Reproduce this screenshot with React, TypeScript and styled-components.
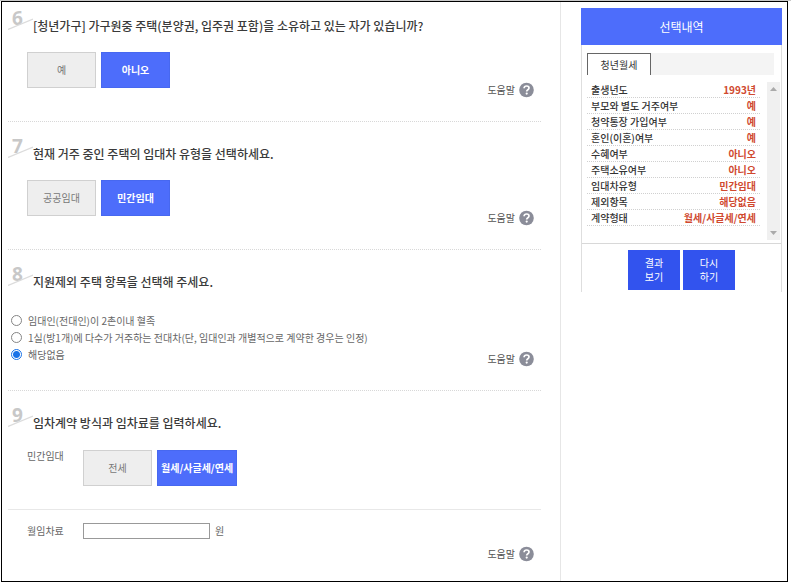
import React, { useState } from "react";
import styled, { createGlobalStyle } from "styled-components";

const GlobalStyle = createGlobalStyle`
  * { box-sizing: border-box; }
  body {
    margin: 0;
    background: #fff;
    color: #333;
    font-family: "Noto Sans CJK KR", "Noto Sans", sans-serif;
    font-size: 10px;
    line-height: 16px;
  }
  button, input { font: inherit; }
  h1, h2, dl, dd, dt, fieldset { margin: 0; padding: 0; border: 0; }
`;

const Page = styled.div`
  min-height: 100vh;
  display: flex;
  padding: 0 3px 2px 1px;
  border-top: 1px solid #c8c8c8;
`;

const Frame = styled.div`
  flex: 1;
  display: flex;
  border: 1px solid #000;
`;

const Questions = styled.main`
  flex: 1;
  min-width: 0;
  padding: 0 19px 0 6px;
  border-right: 1px solid #e6e6e6;
`;

const Section = styled.section`
  padding: 16px 0 23px;
  border-bottom: 1px dotted #d8d8d8;

  &:first-child { padding-top: 8px; }
  &:last-child { border-bottom: 0; padding-bottom: 16px; }
`;

const Head = styled.header`
  display: flex;
  height: 26px;
`;

const Numeral = styled.span`
  position: relative;
  width: 25px;
  padding-left: 4px;
  color: #c8c8c8;
  font-family: "Open Sans", "Noto Sans", sans-serif;
  font-size: 19px;
  font-weight: 700;
  line-height: 16px;
`;

const Slash = styled.svg`
  position: absolute;
  left: 0;
  top: 8px;
`;

const Title = styled.h2`
  padding-top: 7px;
  color: #3a3a3a;
  font-size: 12px;
  font-weight: 500;
  line-height: 18px;
`;

const Body = styled.div<{ $gap?: number; $height?: number }>`
  display: flex;
  align-items: flex-end;
  justify-content: space-between;
  min-height: ${(p) => p.$height ?? 46}px;
  margin-top: ${(p) => p.$gap ?? 16}px;
  padding-right: 7px;
`;

const Choices = styled.div<{ $indent?: boolean }>`
  display: flex;
  align-self: flex-start;
  gap: 5px;
  padding-left: ${(p) => (p.$indent ? 19 : 0)}px;
`;

const Choice = styled.button<{ $on: boolean }>`
  min-width: 69px;
  height: 36px;
  padding: 0 3px;
  border: 1px solid ${(p) => (p.$on ? "#4768f0" : "#d0d0d0")};
  background: ${(p) => (p.$on ? "#4d6dfb" : "#eee")};
  color: ${(p) => (p.$on ? "#fff" : "#777")};
  font-weight: ${(p) => (p.$on ? 700 : 400)};
  white-space: nowrap;
`;

const HelpButton = styled.button`
  display: flex;
  align-items: center;
  gap: 4px;
  flex-shrink: 0;
  margin-left: auto;
  padding: 0;
  border: 0;
  background: none;
  color: #555;
`;

const RadioList = styled.fieldset`
  align-self: flex-start;
  min-width: 0;
  padding-left: 3px;
`;

const RadioRow = styled.label`
  display: flex;
  align-items: center;
  gap: 6px;
  height: 17px;
  color: #666;
`;

const Radio = styled.input`
  appearance: none;
  flex-shrink: 0;
  width: 11px;
  height: 11px;
  margin: 0;
  border: 1px solid #858585;
  border-radius: 50%;
  background: #fff;

  &:checked {
    border-color: #1a73e8;
    background: radial-gradient(circle, #1a73e8 3px, #fff 4px);
  }
`;

const FieldRow = styled.div`
  display: flex;
  padding-left: 19px;
  color: #666;
`;

const FieldLabel = styled.label`
  width: 56px;
  line-height: 12px;
`;

const FieldTitle = styled(FieldLabel).attrs({ as: "span" })``;

const Rule = styled.hr`
  margin: 23px 0 13px;
  border: 0;
  border-top: 1px solid #e8e8e8;
`;

const RentRow = styled(FieldRow)`
  align-items: center;
`;

const RentInput = styled.input`
  width: 127px;
  height: 16px;
  margin-right: 5px;
  padding: 0 4px;
  border: 1px solid #999;
  background: #fff;
`;

const HelpLine = styled.div`
  display: flex;
  margin-top: 7px;
  padding-right: 7px;
`;

const Side = styled.aside`
  width: 226px;
  flex-shrink: 0;
  padding: 6px 5px 0 20px;
`;

const Card = styled.div`
  border: 1px solid #dedede;
  border-top: 0;
  border-bottom: 0;
`;

const SideTitle = styled.h1`
  margin: 0 -1px;
  background: #4d6dfb;
  color: #fff;
  font-size: 12px;
  font-weight: 400;
  line-height: 37px;
  text-align: center;
`;

const Tabs = styled.div`
  margin: 8px 7px 7px 5px;
  background: #f4f4f4;
`;

const Tab = styled.button`
  display: block;
  width: 64px;
  height: 22px;
  padding: 0;
  border: 1px solid #666;
  border-bottom: 0;
  background: #fff;
  color: #333;
`;

const ListArea = styled.div`
  display: flex;
  justify-content: space-between;
  padding: 0 1px 3px 5px;
  border-bottom: 1px solid #d8d8d8;
`;

const Summary = styled.dl`
  flex: 1;
  margin-right: 7px;
`;

const SummaryRow = styled.div`
  display: flex;
  justify-content: space-between;
  height: 16px;
  padding: 0 4px;
  border-bottom: 1px dotted #d0d0d0;
  line-height: 15px;
  font-weight: 500;

  dt { color: #333; }
  dd { color: #d0492f; font-weight: 700; }
`;

const ScrollTrack = styled.div`
  display: flex;
  flex-direction: column;
  align-items: center;
  justify-content: space-between;
  width: 13px;
  height: 158px;
  padding: 5px 0;
  background: #f0f0f0;
`;

const Actions = styled.div`
  display: flex;
  justify-content: center;
  gap: 3px;
  padding: 6px 0 2px;
`;

const Action = styled.button`
  width: 52px;
  height: 40px;
  padding: 0;
  border: 0;
  background: #3253ee;
  color: #fff;
  line-height: 14px;
`;

function QuestionHead({ number, title }: { number: number; title: string }) {
  return (
    <Head>
      <Numeral>
        {number}
        <Slash width="25" height="12" viewBox="0 0 25 12" aria-hidden="true">
          <path d="M0 11.5 25 1" stroke="#dcdcdc" strokeWidth="1.2" />
        </Slash>
      </Numeral>
      <Title>{title}</Title>
    </Head>
  );
}

function Help() {
  return (
    <HelpButton type="button">
      도움말
      <svg width="15" height="16" viewBox="0 0 15 16" aria-hidden="true">
        <circle cx="7.5" cy="8" r="7.3" fill="#8b8d99" />
        <path
          d="M5.1 6.3c0-1.4 1-2.3 2.5-2.3S10 4.8 10 6c0 1.7-2.3 1.7-2.3 3.4"
          fill="none"
          stroke="#fff"
          strokeWidth="1.7"
        />
        <circle cx="7.7" cy="11.6" r="1.1" fill="#fff" />
      </svg>
    </HelpButton>
  );
}

function ChoiceGroup({ options, initial }: { options: string[]; initial: string }) {
  const [value, setValue] = useState(initial);
  return (
    <>
      {options.map((option) => (
        <Choice
          key={option}
          type="button"
          $on={option === value}
          aria-pressed={option === value}
          onClick={() => setValue(option)}
        >
          {option}
        </Choice>
      ))}
    </>
  );
}

const exclusions = [
  "임대인(전대인)이 2촌이내 혈족",
  "1실(방1개)에 다수가 거주하는 전대차(단, 임대인과 개별적으로 계약한 경우는 인정)",
  "해당없음",
];

const summary = [
  ["출생년도", "1993년"],
  ["부모와 별도 거주여부", "예"],
  ["청약통장 가입여부", "예"],
  ["혼인(이혼)여부", "예"],
  ["수혜여부", "아니오"],
  ["주택소유여부", "아니오"],
  ["임대차유형", "민간임대"],
  ["제외항목", "해당없음"],
  ["계약형태", "월세/사글세/연세"],
];

export default function App() {
  return (
    <>
      <GlobalStyle />
      <Page>
        <Frame>
          <Questions>
            <Section>
              <QuestionHead
                number={6}
                title="[청년가구] 가구원중 주택(분양권, 입주권 포함)을 소유하고 있는 자가 있습니까?"
              />
              <Body>
                <Choices $indent>
                  <ChoiceGroup options={["예", "아니오"]} initial="아니오" />
                </Choices>
                <Help />
              </Body>
            </Section>
            <Section>
              <QuestionHead number={7} title="현재 거주 중인 주택의 임대차 유형을 선택하세요." />
              <Body>
                <Choices $indent>
                  <ChoiceGroup options={["공공임대", "민간임대"]} initial="민간임대" />
                </Choices>
                <Help />
              </Body>
            </Section>
            <Section>
              <QuestionHead number={8} title="지원제외 주택 항목을 선택해 주세요." />
              <Body $gap={20} $height={55}>
                <RadioList aria-label="지원제외 주택 항목">
                  {exclusions.map((text) => (
                    <RadioRow key={text}>
                      <Radio type="radio" name="exclusion" defaultChecked={text === "해당없음"} />
                      {text}
                    </RadioRow>
                  ))}
                </RadioList>
                <Help />
              </Body>
            </Section>
            <Section>
              <QuestionHead number={9} title="임차계약 방식과 임차료를 입력하세요." />
              <Body $gap={17} $height={36}>
                <FieldRow>
                  <FieldTitle>민간임대</FieldTitle>
                  <Choices>
                    <ChoiceGroup options={["전세", "월세/사글세/연세"]} initial="월세/사글세/연세" />
                  </Choices>
                </FieldRow>
              </Body>
              <Rule />
              <RentRow>
                <FieldLabel htmlFor="rent">월임차료</FieldLabel>
                <RentInput id="rent" type="text" />
                <span>원</span>
              </RentRow>
              <HelpLine>
                <Help />
              </HelpLine>
            </Section>
          </Questions>
          <Side>
            <Card>
              <SideTitle>선택내역</SideTitle>
              <Tabs role="tablist">
                <Tab type="button" role="tab" aria-selected="true">
                  청년월세
                </Tab>
              </Tabs>
              <ListArea>
                <Summary>
                  {summary.map(([label, value]) => (
                    <SummaryRow key={label}>
                      <dt>{label}</dt>
                      <dd>{value}</dd>
                    </SummaryRow>
                  ))}
                </Summary>
                <ScrollTrack aria-hidden="true">
                  <svg width="7" height="4" viewBox="0 0 7 4">
                    <path d="M0 4 3.5 0 7 4Z" fill="#aaa" />
                  </svg>
                  <svg width="7" height="4" viewBox="0 0 7 4">
                    <path d="M0 0 3.5 4 7 0Z" fill="#aaa" />
                  </svg>
                </ScrollTrack>
              </ListArea>
              <Actions>
                <Action type="button">
                  결과
                  <br />
                  보기
                </Action>
                <Action type="button">
                  다시
                  <br />
                  하기
                </Action>
              </Actions>
            </Card>
          </Side>
        </Frame>
      </Page>
    </>
  );
}
